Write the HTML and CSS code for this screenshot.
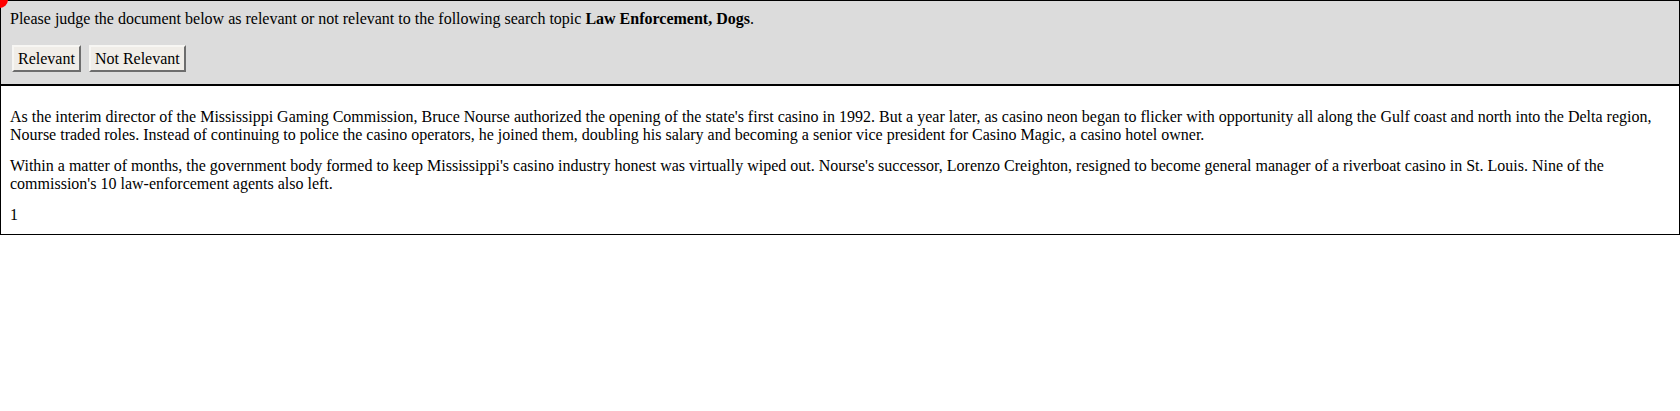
FILE: index.html
```html
<!DOCTYPE html>
<html>
<head>
<meta charset="utf-8">
<title>Relevance judgment</title>
<link rel="stylesheet" href="styles.css">
</head>
<body>
<div class="dot"></div>
<div class="header">
  <div class="prompt">Please judge the document below as relevant or not relevant to the following search topic <b>Law Enforcement, Dogs</b>.</div>
  <div class="actions">
    <button class="btn">Relevant</button>
    <button class="btn">Not Relevant</button>
  </div>
</div>
<div class="doc">
  <p>As the interim director of the Mississippi Gaming Commission, Bruce Nourse authorized the opening of the state's first casino in 1992. But a year later, as casino neon began to flicker with opportunity all along the Gulf coast and north into the Delta region, Nourse traded roles. Instead of continuing to police the casino operators, he joined them, doubling his salary and becoming a senior vice president for Casino Magic, a casino hotel owner.</p>
  <p>Within a matter of months, the government body formed to keep Mississippi's casino industry honest was virtually wiped out. Nourse's successor, Lorenzo Creighton, resigned to become general manager of a riverboat casino in St. Louis. Nine of the commission's 10 law-enforcement agents also left.</p>
  <p class="last">1</p>
</div>
</body>
</html>
```
FILE: styles.css
```css
html, body {
  margin: 0;
  padding: 0;
  background: #fff;
}
body {
  font-family: "Liberation Serif", "Times New Roman", serif;
  font-size: 16px;
  color: #000;
  line-height: 18px;
}
.dot {
  position: absolute;
  left: -9px;
  top: -9px;
  width: 17px;
  height: 17px;
  border-radius: 50%;
  background: #f00;
}
.header {
  background: #dcdcdc;
  border: 1px solid #000;
  padding: 9px 9px 12px;
}
.actions {
  margin-top: 17px;
  display: flex;
  gap: 8px;
  padding-left: 2px;
}
.btn {
  font-family: "Liberation Serif", "Times New Roman", serif;
  font-size: 16px;
  line-height: 18px;
  color: #000;
  background: #f0ede8;
  border: 2px solid;
  border-color: #f7f6f3 #6d6d6d #6d6d6d #f7f6f3;
  padding: 3px 4px 2px;
  height: 27px;
  margin: 0;
}
.doc {
  border: 1px solid #000;
  padding: 9px 9px 0;
}
.doc p {
  margin: 13px 0;
}
.doc p.last {
  margin-bottom: 10px;
}
```
